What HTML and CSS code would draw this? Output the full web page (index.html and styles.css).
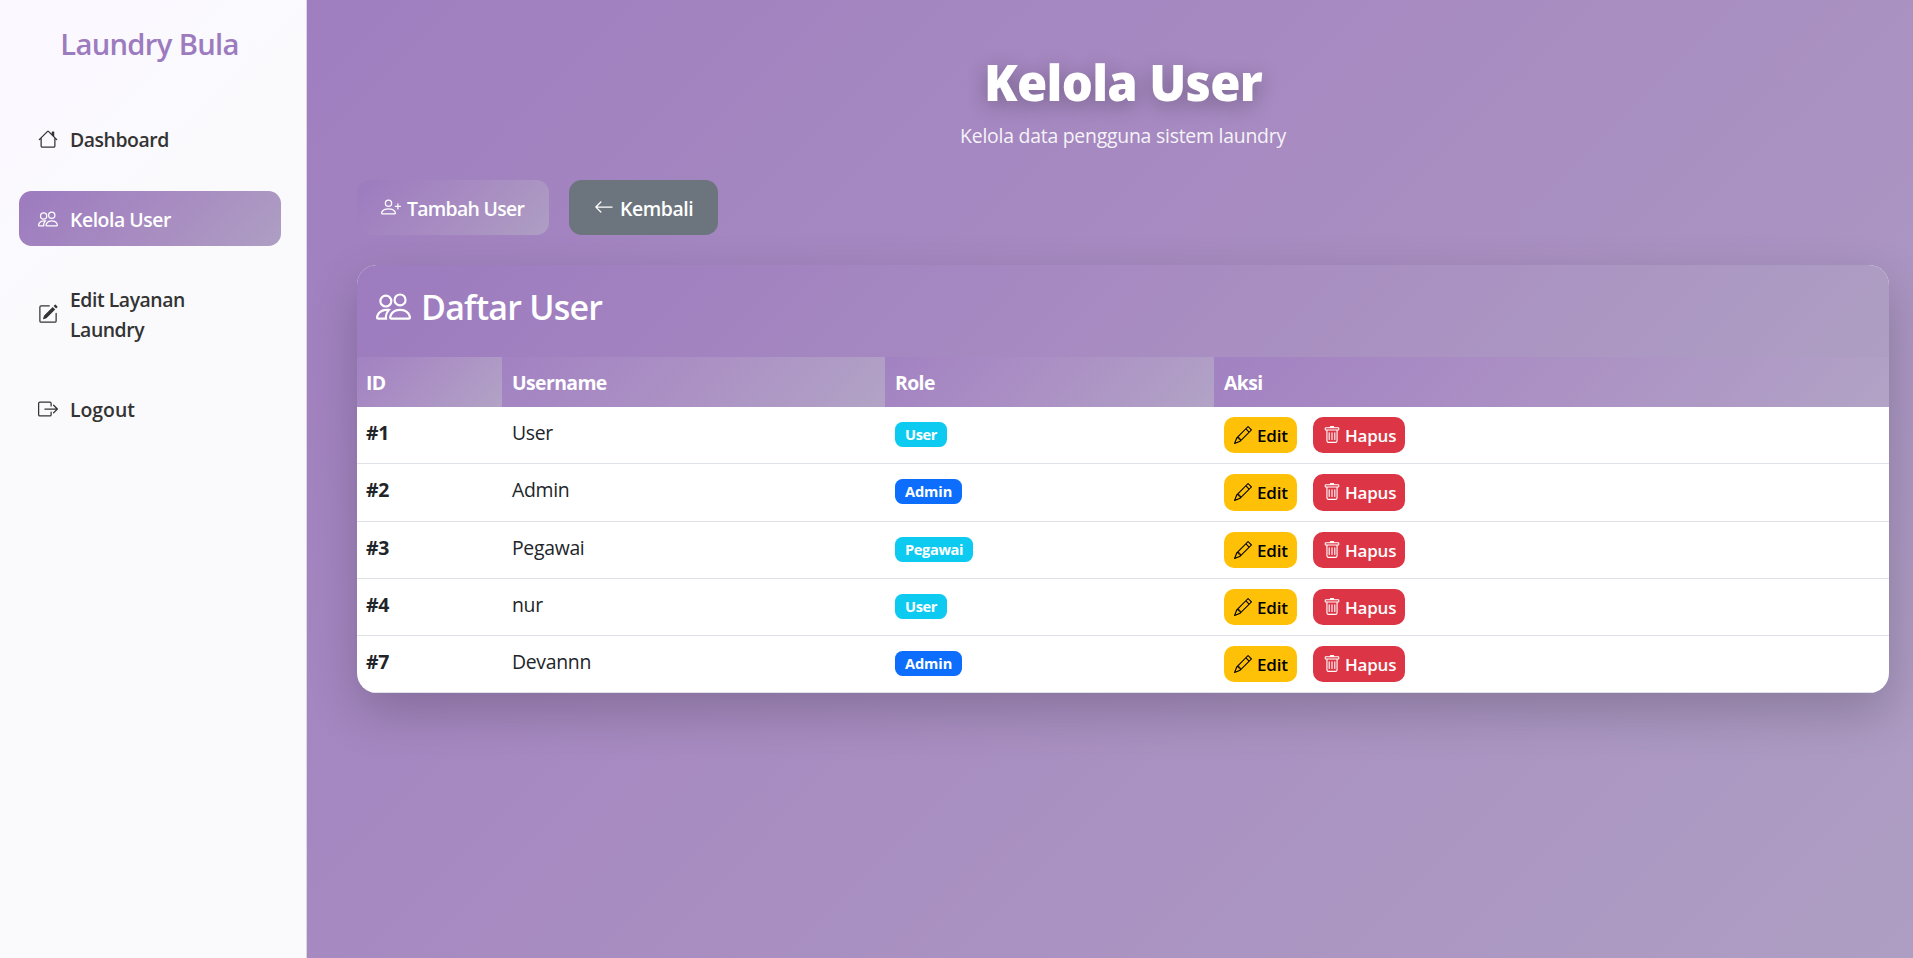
FILE: index.html
```html
<!DOCTYPE html>
<html lang="id">
<head>
<meta charset="utf-8">
<title>Kelola User</title>
<link rel="stylesheet" href="styles.css">
</head>
<body>
<svg width="0" height="0" class="sprite">
  <symbol id="house" viewBox="0 0 16 16"><path d="M8.707 1.5a1 1 0 0 0-1.414 0L.646 8.146a.5.5 0 0 0 .708.708L2 8.207V13.5A1.5 1.5 0 0 0 3.5 15h9a1.5 1.5 0 0 0 1.5-1.5V8.207l.646.647a.5.5 0 0 0 .708-.708L13 5.793V2.5a.5.5 0 0 0-.5-.5h-1a.5.5 0 0 0-.5.5v1.293zM13 7.207V13.5a.5.5 0 0 1-.5.5h-9a.5.5 0 0 1-.5-.5V7.207l5-5z"/></symbol>
  <symbol id="people" viewBox="0 0 16 16"><path d="M15 14s1 0 1-1-1-4-5-4-5 3-5 4 1 1 1 1h8zm-7.978-1A.261.261 0 0 1 7 12.996c.001-.264.167-1.03.76-1.72C8.312 10.629 9.282 10 11 10c1.717 0 2.687.63 3.24 1.276.593.69.758 1.457.76 1.72l-.008.002a.274.274 0 0 1-.014.002H7.022zM11 7a2 2 0 1 0 0-4 2 2 0 0 0 0 4zm3-2a3 3 0 1 1-6 0 3 3 0 0 1 6 0zM6.936 9.28a5.88 5.88 0 0 0-1.23-.247A7.35 7.35 0 0 0 5 9c-4 0-5 3-5 4 0 .667.333 1 1 1h4.216A2.238 2.238 0 0 1 5 13c0-1.01.377-2.042 1.09-2.904.243-.294.526-.569.846-.816zM4.92 10A5.493 5.493 0 0 0 4 13H1c0-.26.164-1.03.76-1.724.545-.636 1.492-1.256 3.16-1.275zM1.5 5.5a3 3 0 1 1 6 0 3 3 0 0 1-6 0zm3-2a2 2 0 1 0 0 4 2 2 0 0 0 0-4z"/></symbol>
  <symbol id="pencil-square" viewBox="0 0 16 16"><path d="M15.502 1.94a.5.5 0 0 1 0 .706L14.459 3.69l-2-2L13.502.646a.5.5 0 0 1 .707 0l1.293 1.293zm-1.75 2.456-2-2L4.939 9.21a.5.5 0 0 0-.121.196l-.805 2.414a.25.25 0 0 0 .316.316l2.414-.805a.5.5 0 0 0 .196-.12l6.813-6.814z"/><path d="M1 13.5A1.5 1.5 0 0 0 2.5 15h11a1.5 1.5 0 0 0 1.5-1.5v-6a.5.5 0 0 0-1 0v6a.5.5 0 0 1-.5.5h-11a.5.5 0 0 1-.5-.5v-11a.5.5 0 0 1 .5-.5H9a.5.5 0 0 0 0-1H2.5A1.5 1.5 0 0 0 1 2.5z"/></symbol>
  <symbol id="logout" viewBox="0 0 16 16"><path d="M10 12.5a.5.5 0 0 1-.5.5h-8a.5.5 0 0 1-.5-.5v-9a.5.5 0 0 1 .5-.5h8a.5.5 0 0 1 .5.5v2a.5.5 0 0 0 1 0v-2A1.5 1.5 0 0 0 9.5 2h-8A1.5 1.5 0 0 0 0 3.5v9A1.5 1.5 0 0 0 1.5 14h8a1.5 1.5 0 0 0 1.5-1.5v-2a.5.5 0 0 0-1 0z"/><path d="M15.854 8.354a.5.5 0 0 0 0-.708l-3-3a.5.5 0 0 0-.708.708L14.293 7.5H5.5a.5.5 0 0 0 0 1h8.793l-2.147 2.146a.5.5 0 0 0 .708.708z"/></symbol>
  <symbol id="person-plus" viewBox="0 0 16 16"><path d="M6 8a3 3 0 1 0 0-6 3 3 0 0 0 0 6zm2-3a2 2 0 1 1-4 0 2 2 0 0 1 4 0zm4 8c0 1-1 1-1 1H1s-1 0-1-1 1-4 6-4 6 3 6 4zm-1-.004c-.001-.246-.154-.986-.832-1.664C9.516 10.68 8.289 10 6 10c-2.29 0-3.516.68-4.168 1.332-.678.678-.83 1.418-.832 1.664h10z"/><path d="M13.5 5a.5.5 0 0 1 .5.5V7h1.5a.5.5 0 0 1 0 1H14v1.5a.5.5 0 0 1-1 0V8h-1.5a.5.5 0 0 1 0-1H13V5.5a.5.5 0 0 1 .5-.5z"/></symbol>
  <symbol id="arrow-left" viewBox="0 0 16 16"><path d="M15 8a.5.5 0 0 0-.5-.5H2.707l3.147-3.146a.5.5 0 1 0-.708-.708l-4 4a.5.5 0 0 0 0 .708l4 4a.5.5 0 0 0 .708-.708L2.707 8.5H14.5A.5.5 0 0 0 15 8z"/></symbol>
  <symbol id="pencil" viewBox="0 0 16 16"><path d="M12.146.146a.5.5 0 0 1 .708 0l3 3a.5.5 0 0 1 0 .708l-10 10a.5.5 0 0 1-.168.11l-5 2a.5.5 0 0 1-.65-.65l2-5a.5.5 0 0 1 .11-.168l10-10zM11.207 2.5 13.5 4.793 14.793 3.5 12.5 1.207 11.207 2.5zm1.586 3L10.5 3.207 4 9.707V10h.5a.5.5 0 0 1 .5.5v.5h.5a.5.5 0 0 1 .5.5v.5h.293l6.5-6.5zm-9.761 5.175-.106.106-1.528 3.821 3.821-1.528.106-.106A.5.5 0 0 1 5 12.5V12h-.5a.5.5 0 0 1-.5-.5V11h-.5a.5.5 0 0 1-.468-.325z"/></symbol>
  <symbol id="trash" viewBox="0 0 16 16"><path d="M5.5 5.5A.5.5 0 0 1 6 6v6a.5.5 0 0 1-1 0V6a.5.5 0 0 1 .5-.5zm2.5 0a.5.5 0 0 1 .5.5v6a.5.5 0 0 1-1 0V6a.5.5 0 0 1 .5-.5zm3 .5a.5.5 0 0 0-1 0v6a.5.5 0 0 0 1 0V6z"/><path fill-rule="evenodd" d="M14.5 3a1 1 0 0 1-1 1H13v9a2 2 0 0 1-2 2H5a2 2 0 0 1-2-2V4h-.5a1 1 0 0 1-1-1V2a1 1 0 0 1 1-1H6a1 1 0 0 1 1-1h2a1 1 0 0 1 1 1h3.5a1 1 0 0 1 1 1v1zM4.118 4 4 4.059V13a1 1 0 0 0 1 1h6a1 1 0 0 0 1-1V4.059L11.882 4H4.118zM2.5 3V2h11v1h-11z"/></symbol>
</svg>
<div class="layout">
  <aside class="sidebar">
    <div class="brand">Laundry Bula</div>
    <nav class="nav">
      <a class="nav-item"><svg class="icon"><use href="#house"/></svg><span>Dashboard</span></a>
      <a class="nav-item active"><svg class="icon"><use href="#people"/></svg><span>Kelola User</span></a>
      <a class="nav-item"><svg class="icon"><use href="#pencil-square"/></svg><span>Edit Layanan Laundry</span></a>
      <a class="nav-item logout"><svg class="icon"><use href="#logout"/></svg><span>Logout</span></a>
    </nav>
  </aside>
  <main class="main">
    <header class="page-head">
      <h1>Kelola User</h1>
      <p>Kelola data pengguna sistem laundry</p>
    </header>
    <div class="actions">
      <a class="btn btn-add"><svg class="icon"><use href="#person-plus"/></svg><span>Tambah User</span></a>
      <a class="btn btn-back"><svg class="icon"><use href="#arrow-left"/></svg><span>Kembali</span></a>
    </div>
    <section class="card">
      <div class="card-head"><svg class="icon"><use href="#people"/></svg><h2>Daftar User</h2></div>
      <div class="row thead"><div>ID</div><div>Username</div><div>Role</div><div>Aksi</div></div>
      <div class="row"><div class="id">#1</div><div>User</div><div><span class="badge info">User</span></div><div class="ops"><a class="op edit"><svg class="icon"><use href="#pencil"/></svg>Edit</a><a class="op del"><svg class="icon"><use href="#trash"/></svg>Hapus</a></div></div>
      <div class="row tall"><div class="id">#2</div><div>Admin</div><div><span class="badge primary">Admin</span></div><div class="ops"><a class="op edit"><svg class="icon"><use href="#pencil"/></svg>Edit</a><a class="op del"><svg class="icon"><use href="#trash"/></svg>Hapus</a></div></div>
      <div class="row"><div class="id">#3</div><div>Pegawai</div><div><span class="badge info">Pegawai</span></div><div class="ops"><a class="op edit"><svg class="icon"><use href="#pencil"/></svg>Edit</a><a class="op del"><svg class="icon"><use href="#trash"/></svg>Hapus</a></div></div>
      <div class="row"><div class="id">#4</div><div>nur</div><div><span class="badge info">User</span></div><div class="ops"><a class="op edit"><svg class="icon"><use href="#pencil"/></svg>Edit</a><a class="op del"><svg class="icon"><use href="#trash"/></svg>Hapus</a></div></div>
      <div class="row"><div class="id">#7</div><div>Devannn</div><div><span class="badge primary">Admin</span></div><div class="ops"><a class="op edit"><svg class="icon"><use href="#pencil"/></svg>Edit</a><a class="op del"><svg class="icon"><use href="#trash"/></svg>Hapus</a></div></div>
    </section>
  </main>
</div>
</body>
</html>
```

FILE: styles.css
```css
:root {
  --grad: linear-gradient(135deg, #9d7bbf 0%, #a78bc1 50%, #ae9ec3 100%);
}
* { box-sizing: border-box; }
body {
  margin: 0;
  font: 400 19.4px/30px "Open Sans", "Noto Sans", sans-serif;
  color: #212529;
  overflow: hidden;
}
.sprite { position: absolute; }
.icon { width: 20px; height: 20px; fill: currentColor; flex: none; }
.layout { display: flex; height: 958px; background: var(--grad); }

.sidebar {
  width: 307px;
  flex: none;
  background: linear-gradient(135deg, #fbf8ff 0%, #fafafd 30%, #fafafd 100%);
  border-right: 1px solid #dcd5e4;
  padding: 25px 26px 0 19px;
}
.brand {
  text-align: center;
  font-size: 29.2px;
  line-height: 38px;
  font-weight: 600;
  letter-spacing: -0.68px;
  color: #9d7bbf;
}
.nav { display: flex; flex-direction: column; gap: 25px; margin: 48px -1px 0 0; }
.nav-item {
  display: flex;
  align-items: center;
  gap: 12px;
  padding: 14px 56px 11px 18px;
  border-radius: 12.5px;
  color: #333;
  font-weight: 600;
  letter-spacing: -0.45px;
}
.nav-item.active { background: var(--grad); color: #fff; }
.nav-item.logout { letter-spacing: 0; }
.nav-item .icon { margin: 0 0 3px 1px; }

.main { flex: 1; padding: 49px 24px 0 50px; color: #fff; }
.page-head { text-align: center; }
.page-head h1 {
  margin: 0;
  font: 900 49px/66px "Noto Sans", sans-serif;
  letter-spacing: -0.7px;
  text-shadow: 0 5px 20px rgba(0, 0, 0, 0.28);
}
.page-head p { margin: 6px 0 0; letter-spacing: -0.23px; opacity: 0.9; }

.actions { display: flex; gap: 20px; margin-top: 29px; }
.btn {
  display: flex;
  align-items: center;
  height: 55px;
  padding-top: 2px;
  border-radius: 12.5px;
  font-weight: 600;
}
.btn .icon { margin-bottom: 3px; }
.btn-add { width: 192px; padding-left: 24px; gap: 6px; background: var(--grad); letter-spacing: -0.7px; }
.btn-back { width: 149px; padding-left: 25px; gap: 6px; background: #6c757d; letter-spacing: -0.4px; }

.card {
  margin-top: 30px;
  border-radius: 20px;
  overflow: hidden;
  background: #fff;
  color: #212529;
  box-shadow: 0 19px 50px rgba(0, 0, 0, 0.2);
}
.card-head {
  display: flex;
  align-items: flex-start;
  gap: 10px;
  height: 92px;
  padding: 20px 19px;
  background: var(--grad);
  color: #fff;
}
.card-head .icon { width: 35px; height: 35px; margin: 4px 0 0; }
.card-head h2 { margin: 0; font-size: 34px; line-height: 45px; font-weight: 600; letter-spacing: -0.77px; }

.row { display: grid; grid-template-columns: 145px 383px 329px 675px; height: 57px; border-bottom: 1px solid #dee2e6; letter-spacing: -0.3px; }
.row.tall { height: 58px; }
.row > div { padding: 11px 10px 0; }
.row.thead { height: 50px; border: 0; color: #fff; font-weight: 700; letter-spacing: -0.6px; }
.row.thead > div { background: linear-gradient(rgba(255, 255, 255, 0.05), rgba(255, 255, 255, 0.05)), var(--grad); }
.row > div:first-child { padding-left: 9px; }
.row .id { font-weight: 700; }
.badge {
  display: block;
  width: fit-content;
  margin-top: 4px;
  padding: 0 9.5px 0 10px;
  height: 25px;
  border-radius: 7.5px;
  font-size: 14.6px;
  line-height: 25px;
  font-weight: 700;
  letter-spacing: -0.35px;
  color: #fff;
}
.info { background: #0dcaf0; }
.primary { background: #0d6efd; letter-spacing: -0.1px; }
.row .ops { display: flex; gap: 16px; padding-top: 10px; }
.op {
  display: flex;
  align-items: center;
  height: 36px;
  padding: 1px 0 0 10px;
  gap: 5px;
  border-radius: 10px;
  font-size: 17px;
  font-weight: 600;
  letter-spacing: -0.2px;
}
.tall .op { height: 37px; }
.op .icon { width: 18px; height: 18px; margin-bottom: 2px; }
.edit { width: 73px; background: #ffc107; color: #000; }
.del { width: 92px; gap: 4px; background: #dc3545; color: #fff; }
```
